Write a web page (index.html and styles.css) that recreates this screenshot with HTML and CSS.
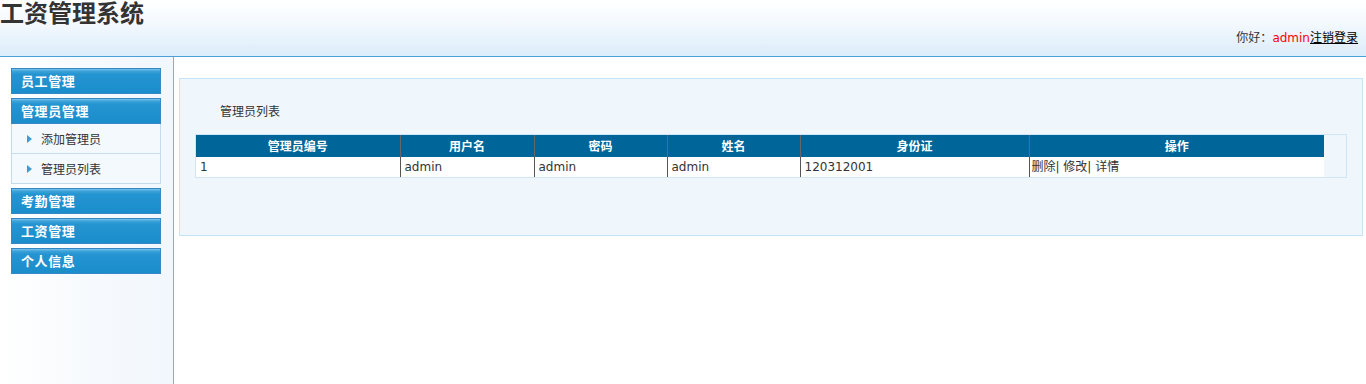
FILE: index.html
```html
<!DOCTYPE html>
<html lang="zh">
<head>
<meta charset="utf-8">
<title>工资管理系统</title>
<link rel="stylesheet" href="styles.css">
</head>
<body>
<div class="header">
  <div class="title">工资管理系统</div>
  <div class="greet">你好：<span class="user">admin</span><a class="logout" href="#">注销登录</a></div>
</div>
<div class="body">
  <div class="sidebar">
    <div class="menu-head">员工管理</div>
    <div class="menu-head">管理员管理</div>
    <div class="submenu">
      <div class="sub-item"><span class="arrow"></span>添加管理员</div>
      <div class="sub-item"><span class="arrow"></span>管理员列表</div>
    </div>
    <div class="menu-head">考勤管理</div>
    <div class="menu-head">工资管理</div>
    <div class="menu-head">个人信息</div>
  </div>
  <div class="main">
    <div class="panel">
      <div class="panel-title">管理员列表</div>
      <div class="table-wrap">
        <table class="grid">
          <colgroup>
            <col style="width:204px"><col style="width:134px"><col style="width:133px"><col style="width:133px"><col style="width:229px"><col style="width:295px">
          </colgroup>
          <thead>
            <tr><th>管理员编号</th><th>用户名</th><th>密码</th><th>姓名</th><th>身份证</th><th>操作</th></tr>
          </thead>
          <tbody>
            <tr><td>1</td><td>admin</td><td>admin</td><td>admin</td><td>120312001</td><td>删除| 修改| 详情</td></tr>
          </tbody>
        </table>
      </div>
    </div>
  </div>
</div>
</body>
</html>
```
FILE: styles.css
```css
* { box-sizing: border-box; }
html, body { margin: 0; padding: 0; height: 100%; }
body {
  font-family: "DejaVu Sans", "Noto Sans CJK SC", sans-serif;
  font-size: 12px;
  color: #333;
  background: #fff;
  display: flex;
  flex-direction: column;
}
.header {
  height: 57px;
  border-bottom: 1px solid #4aa0d8;
  background: linear-gradient(to bottom, #ffffff 0%, #f4f9fe 40%, #dcecfa 100%);
  display: flex;
  flex-direction: column;
}
.title {
  font-family: "Noto Sans CJK SC", sans-serif;
  font-size: 24px;
  font-weight: bold;
  line-height: 24px;
  color: #333;
}
.greet {
  margin-top: 6px;
  align-self: flex-end;
  padding-right: 8px;
  line-height: 14px;
  font-family: "Noto Sans CJK SC", "DejaVu Sans", sans-serif;
  color: #333;
}
.greet .user { color: #ff0000; font-family: "DejaVu Sans", sans-serif; }
.greet .logout { color: #000; text-decoration: underline; }
.body {
  flex: 1;
  display: flex;
}
.sidebar {
  width: 174px;
  border-right: 1px solid #7cb2da;
  background: linear-gradient(to right, #ffffff 0%, #f7fafd 50%, #f1f7fd 100%);
  padding: 11px 12px 0 11px;
  display: flex;
  flex-direction: column;
  gap: 4px;
}
.menu-head {
  height: 26px;
  border: 1px solid #3588c4;
  background: linear-gradient(to bottom, #7cc4ec 0, #3ea3da 2px, #2495d1 5px, #1c8dcc 100%);
  color: #fff;
  font-family: "Noto Sans CJK SC", sans-serif;
  font-weight: bold;
  font-size: 13px;
  letter-spacing: 0.6px;
  line-height: 24px;
  padding-left: 9px;
}
.submenu {
  margin-top: -4px;
  border: 1px solid #c4dbec;
  border-top: none;
  background: #f4f9fd;
}
.sub-item {
  height: 29px;
  padding-left: 15px;
  display: flex;
  align-items: center;
  font-family: "Noto Sans CJK SC", sans-serif;
  color: #333;
}
.sub-item + .sub-item { border-top: 1px solid #c8dded; height: 30px; }
.arrow {
  width: 0; height: 0;
  border-top: 4px solid transparent;
  border-bottom: 4px solid transparent;
  border-left: 5px solid #3d9bd6;
  margin-right: 9px;
}
.main {
  flex: 1;
  padding: 21px 3px 0 5px;
}
.panel {
  height: 158px;
  border: 1px solid #c8e2f6;
  background: #f0f7fc;
  padding: 24px 15px 0 15px;
}
.panel-title {
  font-family: "Noto Sans CJK SC", sans-serif;
  padding-left: 25px;
  line-height: 16px;
  color: #333;
}
.table-wrap {
  margin-top: 15px;
  width: 1152px;
  border: 1px solid #cfe6f8;
  background: #f0f7fc;
}
.grid {
  width: 1128px;
  border-collapse: collapse;
  table-layout: fixed;
}
.grid th {
  height: 22px;
  background: #006699;
  color: #fff;
  font-family: "Noto Sans CJK SC", sans-serif;
  font-weight: bold;
  font-size: 12px;
  padding: 0;
  border-left: 1px solid #666;
  line-height: 20px;
}
.grid td {
  height: 20px;
  background: #fff;
  padding: 0 4px;
  border-left: 1px solid #555;
  font-family: "DejaVu Sans", "Noto Sans CJK SC", sans-serif;
  font-size: 12px;
  color: #333;
  line-height: 18px;
}
.grid th:first-child, .grid td:first-child { border-left: none; }
.grid td:last-child { padding-left: 2px; }
```
